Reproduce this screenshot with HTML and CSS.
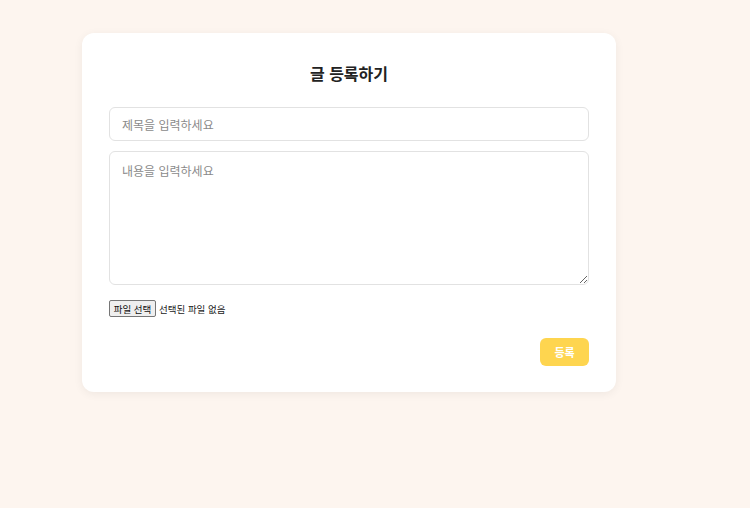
FILE: index.html
```html
<!DOCTYPE html>
<html lang="ko">
<head>
<meta charset="utf-8">
<link rel="stylesheet" href="styles.css">
</head>
<body>
<div class="card">
  <h2 class="title">글 등록하기</h2>
  <form class="form">
    <input class="field" type="text" placeholder="제목을 입력하세요">
    <textarea class="field area" placeholder="내용을 입력하세요"></textarea>
    <div class="filerow">
      <label class="filebtn">파일 선택<input class="file" type="file"></label>
      <span class="filename">선택된 파일 없음</span>
    </div>
    <div class="actions"><button type="button" class="submit">등록</button></div>
  </form>
</div>
</body>
</html>
```
FILE: styles.css
```css
html, body { margin: 0; padding: 0; }
body {
  background: #fdf5ef;
  font-family: "Noto Sans CJK KR", "Noto Sans", sans-serif;
  width: 750px;
  height: 508px;
  padding-top: 33px;
  box-sizing: border-box;
}
.card {
  margin-left: 82px;
  width: 534px;
  box-sizing: border-box;
  background: #fff;
  border-radius: 12px;
  box-shadow: 0 2px 10px rgba(0,0,0,0.06);
  padding: 30px 27px 26px;
}
.title {
  margin: 0 0 24px;
  text-align: center;
  font-size: 16px;
  line-height: 20px;
  font-weight: 700;
  color: #222;
}
.form { display: flex; flex-direction: column; }
.field {
  box-sizing: border-box;
  width: 480px;
  border: 1px solid #e2e2e2;
  border-radius: 6px;
  font-family: inherit;
  font-size: 12px;
  padding: 0 12px;
  color: #333;
  outline: none;
  background: #fff;
}
.field::placeholder { color: #8a8a8a; }
input.field { height: 34px; margin-bottom: 10px; }
.area { height: 134px; padding: 10px 12px; resize: vertical; line-height: 17px; margin-bottom: 15px; }
.filerow { display: flex; align-items: center; gap: 3px; height: 17px; font-size: 9.5px; color: #222; }
.filebtn {
  box-sizing: border-box;
  height: 17px;
  width: 47px;
  display: flex;
  align-items: center;
  justify-content: center;
  border: 1px solid #767676;
  border-radius: 2px;
  background: #efefef;
  color: #111;
}
.file { display: none; }
.actions { display: flex; justify-content: flex-end; margin-top: 21px; }
.submit {
  width: 49px;
  height: 28px;
  background: #fed54f;
  color: #fff;
  border: none;
  border-radius: 6px;
  font-family: inherit;
  font-size: 11px;
  font-weight: 700;
}
```
